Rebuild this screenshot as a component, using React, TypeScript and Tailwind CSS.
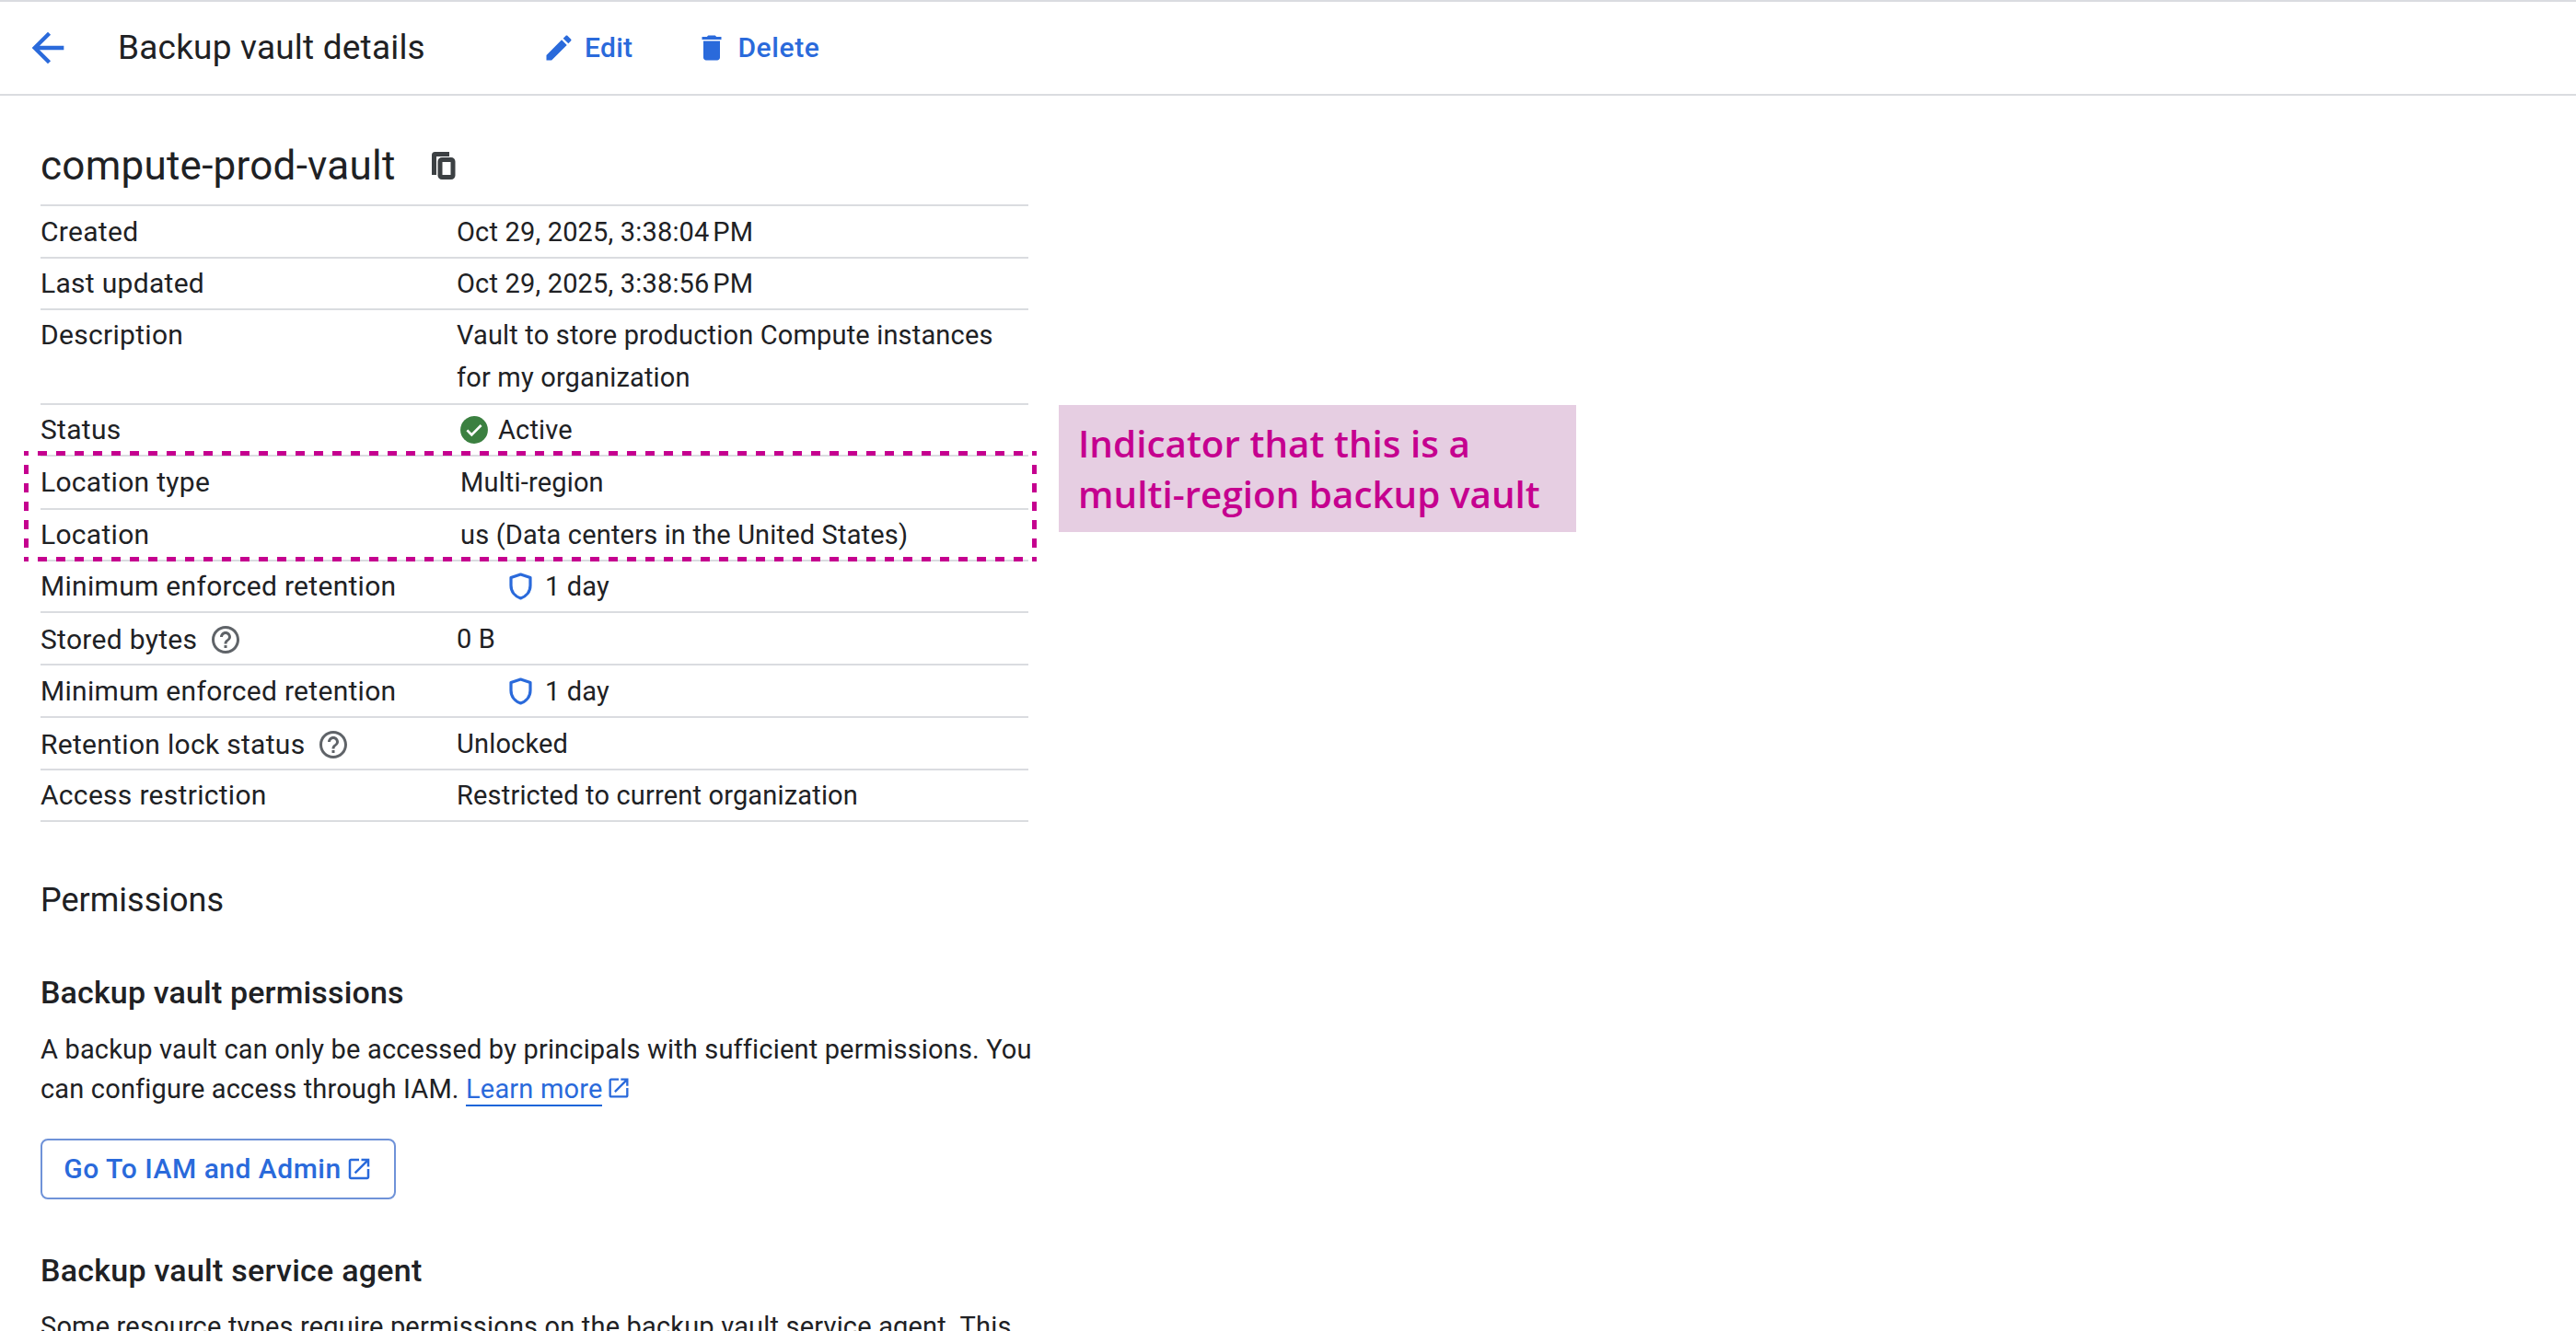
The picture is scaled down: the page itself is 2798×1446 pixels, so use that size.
import type { ReactNode } from 'react';

const icons = {
  back: 'M20 11H7.83l5.59-5.59L12 4l-8 8 8 8 1.41-1.41L7.83 13H20v-2z',
  edit: 'M3 17.25V21h3.75L17.81 9.94l-3.75-3.75L3 17.25zM20.71 7.04c.39-.39.39-1.02 0-1.41l-2.34-2.34c-.39-.39-1.02-.39-1.41 0l-1.83 1.83 3.75 3.75 1.83-1.83z',
  trash: 'M6 19c0 1.1.9 2 2 2h8c1.1 0 2-.9 2-2V7H6v12zM19 4h-3.5l-1-1h-5l-1 1H5v2h14V4z',
  help: 'M11 18h2v-2h-2v2zm1-16C6.48 2 2 6.48 2 12s4.48 10 10 10 10-4.48 10-10S17.52 2 12 2zm0 18c-4.41 0-8-3.59-8-8s3.59-8 8-8 8 3.59 8 8-3.59 8-8 8zm0-14c-2.21 0-4 1.79-4 4h2c0-1.1.9-2 2-2s2 .9 2 2c0 2-3 1.75-3 5h2c0-2.25 3-2.5 3-5 0-2.21-1.79-4-4-4z',
  external: 'M19 19H5V5h7V3H5c-1.11 0-2 .9-2 2v14c0 1.1.89 2 2 2h14c1.1 0 2-.9 2-2v-7h-2v7zM14 3v2h3.59l-9.83 9.83 1.41 1.41L19 6.41V10h2V3h-7z',
};

function Icon({ d, className }: { d: string; className: string }) {
  return (
    <svg viewBox="0 0 24 24" fill="currentColor" className={className}>
      <path d={d} />
    </svg>
  );
}

function Row({ label, height, help, top, children }: { label: string; height: string; help?: boolean; top?: boolean; children: ReactNode }) {
  return (
    <div className={`flex border-b-2 border-[#dadce0] ${top ? 'items-start pt-[4px]' : 'items-center'} ${height}`}>
      <div className={`flex w-[452px] shrink-0 items-center gap-[13px] text-[30px] font-[450] tracking-[0.3px] ${help ? 'mt-[3px]' : ''}`}>
        {label}
        {help && <Icon d={icons.help} className="h-9 w-9 text-[#5f6368]" />}
      </div>
      <div className="min-w-0 flex-1">{children}</div>
    </div>
  );
}

function Retention() {
  return (
    <div className="flex items-center gap-[14px] pl-[57px]">
      <svg viewBox="0 0 25 30" fill="none" className="h-[30px] w-[25px] text-[#2a6adb]">
        <path d="M12.5 2L23 5.5V14C23 21 18.5 26 12.5 28C6.5 26 2 21 2 14V5.5Z" stroke="currentColor" strokeWidth="3.2" strokeLinejoin="round" />
      </svg>
      1 day
    </div>
  );
}

export default function App() {
  return (
    <div className="relative h-[1446px] w-[2798px] overflow-hidden bg-white font-['Roboto',sans-serif] text-[29px] leading-[46px] tracking-[0.17px] text-[#202124]">
      <header className="flex h-[104px] items-center border-y-2 border-[#dadce0]">
        <Icon d={icons.back} className="ml-[26px] h-[52px] w-[52px] text-[#2a6adb]" />
        <h1 className="ml-[50px] w-[461px] text-[37px] tracking-[0.2px]">Backup vault details</h1>
        <button className="flex items-center gap-[10px] text-[30px] font-medium tracking-[0.3px] text-[#2a6adb]">
          <Icon d={icons.edit} className="h-9 w-9" />
          Edit
        </button>
        <button className="ml-[68px] flex items-center gap-[10px] text-[30px] font-medium tracking-[0.6px] text-[#2a6adb]">
          <Icon d={icons.trash} className="h-9 w-9" />
          Delete
        </button>
      </header>

      <main className="w-[1117px] pl-[44px]">
        <div className="flex h-[118px] items-center gap-[39px] pt-[34px] text-[44px] tracking-[0.25px]">
          compute-prod-vault
          <svg viewBox="0 0 26 30" fill="none" className="h-[30px] w-[26px] text-[#3c4043]">
            <path d="M19 2.5H3.5a1 1 0 0 0-1 1V25" stroke="currentColor" strokeWidth="5" />
            <rect x="9" y="8.5" width="14" height="19" rx="2" stroke="currentColor" strokeWidth="5" />
          </svg>
        </div>

        <section className="border-t-2 border-[#dadce0]">
          <Row label="Created" height="h-[57px]">Oct 29, 2025, 3:38:04{'\u202f'}PM</Row>
          <Row label="Last updated" height="h-[56px]">Oct 29, 2025, 3:38:56{'\u202f'}PM</Row>
          <Row label="Description" height="h-[103px]" top>
            Vault to store production Compute instances
            <br />
            for my organization
          </Row>
          <Row label="Status" height="h-[56px]">
            <div className="flex items-center gap-[10px] pl-[3px]">
              <svg viewBox="0 0 24 24" className="h-8 w-8">
                <circle cx="12" cy="12" r="11.2" fill="#3b8040" />
                <path d="M6.3 12.3L10 16L17.7 8.3" fill="none" stroke="#fff" strokeWidth="2" />
              </svg>
              Active
            </div>
          </Row>
          <Row label="Location type" height="h-[58px]"><div className="pl-[4px]">Multi-region</div></Row>
          <Row label="Location" height="h-[56px]"><div className="pl-[4px]">us (Data centers in the United States)</div></Row>
          <Row label="Minimum enforced retention" height="h-[56px]"><Retention /></Row>
          <Row label="Stored bytes" height="h-[57px]" help>0 B</Row>
          <Row label="Minimum enforced retention" height="h-[57px]"><Retention /></Row>
          <Row label="Retention lock status" height="h-[57px]" help>Unlocked</Row>
          <Row label="Access restriction" height="h-[56px]">Restricted to current organization</Row>
        </section>

        <h2 className="mt-[62px] text-[36px] tracking-normal">Permissions</h2>
        <h3 className="mt-[54px] text-[34px] font-medium tracking-[0.15px]">Backup vault permissions</h3>
        <p className="mt-[18px] whitespace-nowrap leading-[43px]">
          A backup vault can only be accessed by principals with sufficient permissions. You
          <br />
          can configure access through IAM.{' '}
          <a className="border-b-2 border-[#1a66d9] text-[#2a6adb]">Learn more</a>
          <Icon d={icons.external} className="ml-[4px] inline h-7 w-7 align-[-3px] text-[#2a6adb]" />
        </p>
        <button className="mt-[32px] flex h-[66px] w-[386px] items-center justify-center gap-[4px] rounded-lg border-2 border-[#6f92d8] text-[30px] font-medium tracking-[0.5px] text-[#2a6adb]">
          Go To IAM and Admin
          <Icon d={icons.external} className="h-[30px] w-[30px]" />
        </button>
        <h3 className="mt-[54px] text-[34px] font-medium tracking-[0.25px]">Backup vault service agent</h3>
        <p className="mt-[16px] whitespace-nowrap leading-[44px]">
          Some resource types require permissions on the backup vault service agent. This
        </p>
      </main>

      {/* highlight drawn over the two location rows */}
      <svg className="absolute left-[26px] top-[490px]" width="1100" height="120" fill="none" stroke="#c5008f" strokeWidth="5" strokeDasharray="10 10">
        <path d="M-5 2.5H1100" />
        <path d="M-5 117.5H1100" />
        <path d="M2.5 -5V120" />
        <path d="M1097.5 -5V120" />
      </svg>
      <div className="absolute left-[1150px] top-[440px] h-[138px] w-[562px] bg-[#e6cee2] px-[21px] py-[14px] font-['Open_Sans',sans-serif] text-[40.4px] font-semibold leading-[55px] tracking-normal text-[#c5008f]">
        Indicator that this is a multi-region backup vault
      </div>
    </div>
  );
}
